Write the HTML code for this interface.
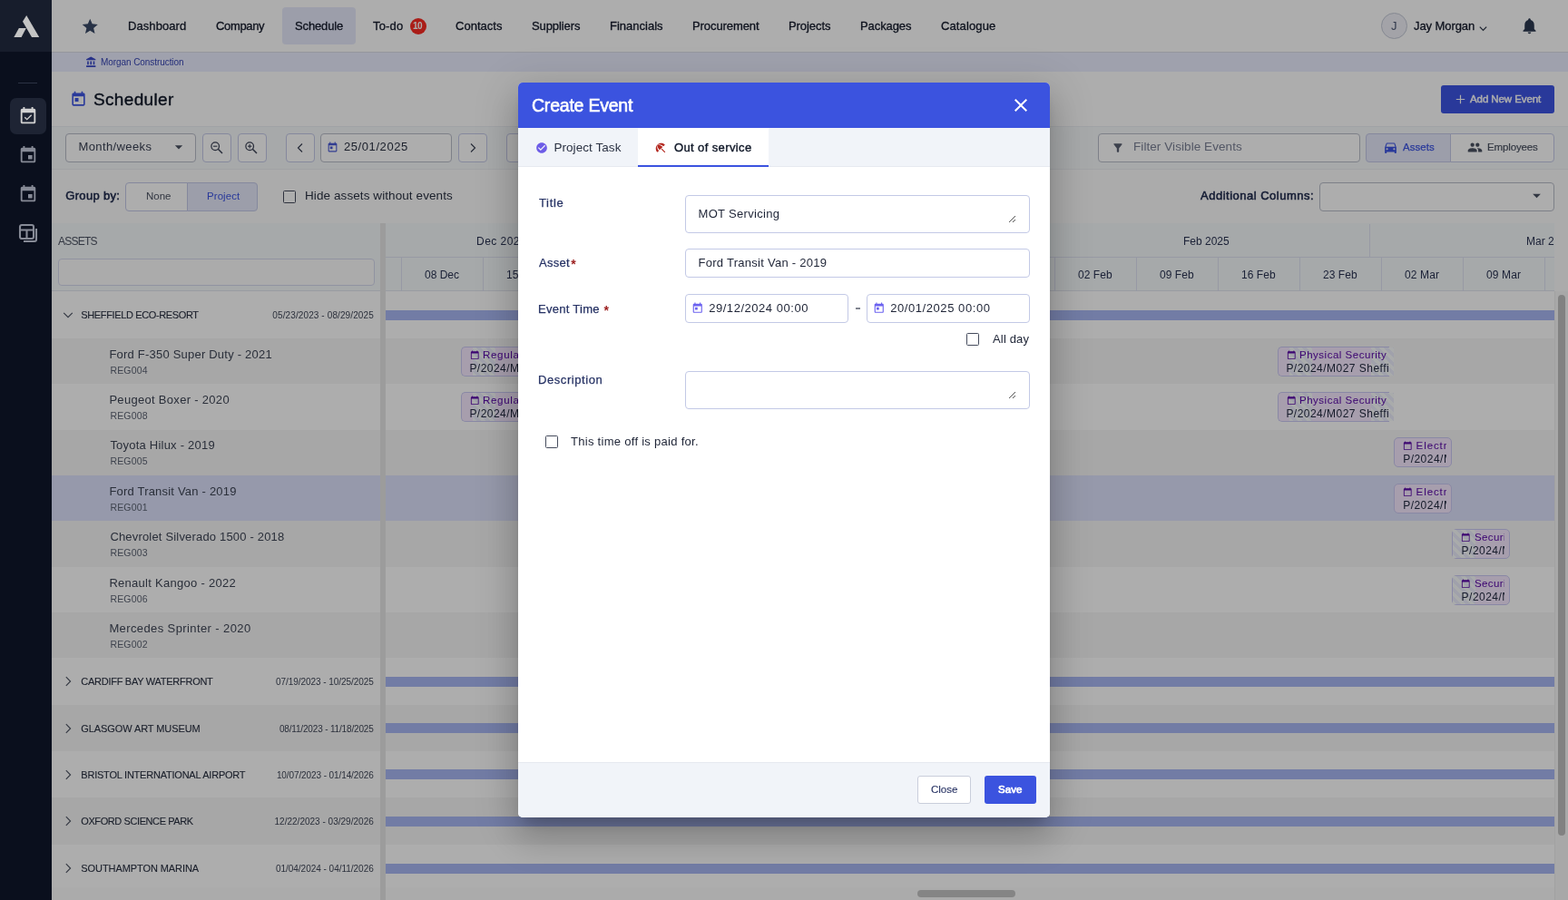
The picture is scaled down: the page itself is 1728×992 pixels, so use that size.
<!DOCTYPE html>
<html lang="en">
<head>
<meta charset="utf-8">
<title>Scheduler - Create Event</title>
<style>
html,body{margin:0;padding:0;}
body{width:1728px;height:992px;overflow:hidden;position:relative;background:#fff;font-family:"Liberation Sans", sans-serif;}
.b{position:absolute;box-sizing:border-box;}
.i{position:absolute;display:block;overflow:visible;}
.t{position:absolute;white-space:nowrap;font-family:"Liberation Sans", sans-serif;}
#page,#overlay,#modalwrap{position:absolute;left:0;top:0;width:1728px;height:992px;overflow:hidden;}
#overlay{background:rgba(0,0,0,0.32);}
#page,#modalwrap{will-change:transform;}
</style>
</head>
<body>
<div id="page">
<div class="b" style="left:57px;top:0px;width:1671px;height:58px;background:#ffffff;border-bottom:1px solid #dcdfe8;"></div>
<div class="b" style="left:311px;top:8px;width:81px;height:41px;background:#e6e9fb;border-radius:4px;"></div>
<svg class="i" style="left:89.4px;top:18.7px" width="20.5" height="20.5" viewBox="0 0 24 24" fill="#3a4a68" ><path d="M12 17.27L18.18 21l-1.64-7.03L22 9.24l-7.19-.61L12 2 9.19 8.63 2 9.24l5.46 4.73L5.82 21z"/></svg>
<div class="b" style="left:451.5px;top:19.5px;width:18px;height:18px;background:#fb2c24;border-radius:9px;"></div>
<div class="b" style="left:1522px;top:14px;width:29px;height:29px;background:#f0f1f8;border:1px solid #c4c9d6;border-radius:15px;"></div>
<svg class="i" style="left:1629px;top:26px" width="11" height="11" viewBox="0 0 12 12" ><path d="M2 4l4 4 4-4" stroke="#2b3445" stroke-width="1.4" fill="none"/></svg>
<svg class="i" style="left:1675px;top:18.4px" width="21" height="21" viewBox="0 0 24 24" fill="#2b3850" ><path d="M12 22c1.1 0 2-.9 2-2h-4c0 1.1.89 2 2 2zm6-6v-5c0-3.07-1.64-5.64-4.5-6.32V4c0-.83-.67-1.5-1.5-1.5s-1.5.67-1.5 1.5v.68C7.63 5.36 6 7.92 6 11v5l-2 2v1h16v-1l-2-2z"/></svg>
<div class="b" style="left:57px;top:58px;width:1671px;height:21px;background:#eaedff;"></div>
<svg class="i" style="left:94px;top:62px" width="13" height="13" viewBox="0 0 24 24" fill="#3a49c9" ><path d="M4 10v7h3v-7H4zm6 0v7h3v-7h-3zM2 22h19v-3H2v3zm14-12v7h3v-7h-3zm-4.5-9L2 6v2h19V6l-9.5-5z"/></svg>
<svg class="i" style="left:76.5px;top:99.5px" width="19" height="19" viewBox="0 0 24 24" fill="#3d55e3" ><path d="M19 3h-1V1h-2v2H8V1H6v2H5c-1.11 0-1.99.9-1.99 2L3 19c0 1.1.89 2 2 2h14c1.1 0 2-.9 2-2V5c0-1.1-.9-2-2-2zm0 16H5V8h14v11zM7 10h5v5H7z"/></svg>
<div class="b" style="left:1588px;top:94px;width:125px;height:31px;background:#3d55e3;border-radius:3px;"></div>
<svg class="i" style="left:1604px;top:104px" width="11" height="11" viewBox="0 0 11 11" ><path d="M5.5 0.8v9.4M0.8 5.5h9.4" stroke="#fff" stroke-width="1.2" fill="none"/></svg>
<div class="b" style="left:57px;top:139px;width:1671px;height:48px;background:#f6f9fb;border-top:1px solid #eceff4;border-bottom:1px solid #eceff4;"></div>
<div class="b" style="left:72px;top:147px;width:144px;height:32px;background:#ffffff;border:1px solid #b9bdc9;border-radius:4px;"></div>
<svg class="i" style="left:186.5px;top:152.1px" width="20" height="20" viewBox="0 0 24 24" fill="#4b5262" ><path d="M7 10l5 5 5-5z"/></svg>
<div class="b" style="left:223px;top:147px;width:32px;height:32px;background:#ffffff;border:1px solid #c4c9e8;border-radius:4px;"></div>
<svg class="i" style="left:232.0px;top:156.4px" width="14" height="14" viewBox="0 0 14 14" ><circle cx="5.2" cy="5.2" r="4.3" fill="none" stroke="#3c4356" stroke-width="1.25"/><path d="M8.3 8.3L13 13" stroke="#3c4356" stroke-width="1.5" fill="none"/><path d="M3 5.2h4.4" stroke="#3c4356" stroke-width="1.1" fill="none"/></svg>
<div class="b" style="left:262px;top:147px;width:32px;height:32px;background:#ffffff;border:1px solid #c4c9e8;border-radius:4px;"></div>
<svg class="i" style="left:270.4px;top:156.4px" width="14" height="14" viewBox="0 0 14 14" ><circle cx="5.2" cy="5.2" r="4.3" fill="none" stroke="#3c4356" stroke-width="1.25"/><path d="M8.3 8.3L13 13" stroke="#3c4356" stroke-width="1.5" fill="none"/><path d="M3 5.2h4.4" stroke="#3c4356" stroke-width="1.1" fill="none"/><path d="M5.2 3v4.4" stroke="#3c4356" stroke-width="1.1" fill="none"/></svg>
<div class="b" style="left:315px;top:147px;width:32px;height:32px;background:#ffffff;border:1px solid #c4c9e8;border-radius:4px;"></div>
<svg class="i" style="left:325px;top:157px" width="12" height="12" viewBox="0 0 12 12" ><path d="M8 1.5L3.5 6 8 10.5" stroke="#3c4356" stroke-width="1.2" fill="none"/></svg>
<div class="b" style="left:353px;top:147px;width:145px;height:32px;background:#ffffff;border:1px solid #b9bdc9;border-radius:4px;"></div>
<svg class="i" style="left:360px;top:156px" width="13" height="13" viewBox="0 0 24 24" fill="#4a5bd6" ><path d="M19 3h-1V1h-2v2H8V1H6v2H5c-1.11 0-1.99.9-1.99 2L3 19c0 1.1.89 2 2 2h14c1.1 0 2-.9 2-2V5c0-1.1-.9-2-2-2zm0 16H5V8h14v11zM7 10h5v5H7z"/></svg>
<div class="b" style="left:505px;top:147px;width:32px;height:32px;background:#ffffff;border:1px solid #c4c9e8;border-radius:4px;"></div>
<svg class="i" style="left:515px;top:157px" width="12" height="12" viewBox="0 0 12 12" ><path d="M4 1.5L8.5 6 4 10.5" stroke="#3c4356" stroke-width="1.2" fill="none"/></svg>
<div class="b" style="left:558px;top:147px;width:60px;height:32px;background:#ffffff;border:1px solid #c4c9e8;border-radius:4px;"></div>
<div class="b" style="left:1210px;top:147px;width:289px;height:32px;background:#ffffff;border:1px solid #b9bdc9;border-radius:4px;"></div>
<svg class="i" style="left:1225px;top:156px" width="14" height="14" viewBox="0 0 24 24" fill="#5a6172" ><path d="M4.25 5.61C6.27 8.2 10 13 10 13v6c0 .55.45 1 1 1h2c.55 0 1-.45 1-1v-6s3.72-4.8 5.74-7.39A.998.998 0 0 0 18.95 4H5.04c-.83 0-1.3.95-.79 1.61z"/></svg>
<div class="b" style="left:1505px;top:147px;width:94px;height:32px;background:#e6e9fb;border:1px solid #c4c9e8;border-radius:4px 0 0 4px;"></div>
<div class="b" style="left:1598px;top:147px;width:115px;height:32px;background:#ffffff;border:1px solid #c4c9e8;border-radius:0 4px 4px 0;"></div>
<svg class="i" style="left:1524px;top:154px" width="17" height="17" viewBox="0 0 24 24" fill="#3d55e3" ><path d="M18.92 6.01C18.72 5.42 18.16 5 17.5 5h-11c-.66 0-1.21.42-1.42 1.01L3 12v8c0 .55.45 1 1 1h1c.55 0 1-.45 1-1v-1h12v1c0 .55.45 1 1 1h1c.55 0 1-.45 1-1v-8l-2.08-5.99zM6.5 16c-.83 0-1.5-.67-1.5-1.5S5.67 13 6.5 13s1.5.67 1.5 1.5S7.33 16 6.5 16zm11 0c-.83 0-1.5-.67-1.5-1.5s.67-1.5 1.5-1.5 1.5.67 1.5 1.5-.67 1.5-1.5 1.5zM5 11l1.5-4.5h11L19 11H5z"/></svg>
<svg class="i" style="left:1617px;top:154px" width="17" height="17" viewBox="0 0 24 24" fill="#4b5262" ><path d="M16 11c1.66 0 2.99-1.34 2.99-3S17.66 5 16 5c-1.66 0-3 1.34-3 3s1.34 3 3 3zm-8 0c1.66 0 2.99-1.34 2.99-3S9.66 5 8 5C6.34 5 5 6.34 5 8s1.34 3 3 3zm0 2c-2.33 0-7 1.17-7 3.5V19h14v-2.5c0-2.33-4.67-3.5-7-3.5zm8 0c-.29 0-.62.02-.97.05 1.16.84 1.97 1.97 1.97 3.45V19h6v-2.5c0-2.33-4.67-3.5-7-3.5z"/></svg>
<div class="b" style="left:57px;top:187px;width:1671px;height:59px;background:#fdfdfd;"></div>
<div class="b" style="left:138px;top:201px;width:69px;height:32px;background:#ffffff;border:1px solid #c4c9e8;border-radius:4px 0 0 4px;"></div>
<div class="b" style="left:206px;top:201px;width:78px;height:32px;background:#e6e9fb;border:1px solid #c4c9e8;border-radius:0 4px 4px 0;"></div>
<div class="b" style="left:312.2px;top:209.5px;width:14px;height:14px;background:#ffffff;border:1.4px solid #454b5c;border-radius:1.5px;"></div>
<div class="b" style="left:1454px;top:201px;width:259px;height:32px;background:#ffffff;border:1px solid #b9bdc9;border-radius:4px;"></div>
<svg class="i" style="left:1683.3px;top:205.3px" width="21" height="21" viewBox="0 0 24 24" fill="#4b5262" ><path d="M7 10l5 5 5-5z"/></svg>
<div class="b" style="left:57px;top:246px;width:1671px;height:75px;background:#f5f9fb;border-bottom:1px solid #e2e5ee;"></div>
<div class="b" style="left:64px;top:285px;width:349px;height:30px;background:#fdfdfd;border:1px solid #d5d9ee;border-radius:4px;"></div>
<div class="b" style="left:425px;top:283px;width:1288px;height:1px;background:#dfe2f2;"></div>
<div class="b" style="left:442px;top:284px;width:1px;height:37px;background:#dfe2f2;"></div>
<div class="b" style="left:532px;top:284px;width:1px;height:37px;background:#dfe2f2;"></div>
<div class="b" style="left:1162px;top:284px;width:1px;height:37px;background:#dfe2f2;"></div>
<div class="b" style="left:1252px;top:284px;width:1px;height:37px;background:#dfe2f2;"></div>
<div class="b" style="left:1342px;top:284px;width:1px;height:37px;background:#dfe2f2;"></div>
<div class="b" style="left:1432px;top:284px;width:1px;height:37px;background:#dfe2f2;"></div>
<div class="b" style="left:1522px;top:284px;width:1px;height:37px;background:#dfe2f2;"></div>
<div class="b" style="left:1612px;top:284px;width:1px;height:37px;background:#dfe2f2;"></div>
<div class="b" style="left:1702px;top:284px;width:1px;height:37px;background:#dfe2f2;"></div>
<div class="b" style="left:1509px;top:247px;width:1px;height:37px;background:#dfe2f2;"></div>
<div class="b" style="left:57px;top:322px;width:1656px;height:51px;background:#ffffff;"></div>
<div class="b" style="left:57px;top:373px;width:1656px;height:50px;background:#f6f6f6;"></div>
<div class="b" style="left:57px;top:423px;width:1656px;height:51px;background:#ffffff;"></div>
<div class="b" style="left:57px;top:474px;width:1656px;height:50px;background:#f6f6f6;"></div>
<div class="b" style="left:57px;top:524px;width:1656px;height:50px;background:#dde2fc;"></div>
<div class="b" style="left:57px;top:574px;width:1656px;height:51px;background:#f6f6f6;"></div>
<div class="b" style="left:57px;top:625px;width:1656px;height:50px;background:#ffffff;"></div>
<div class="b" style="left:57px;top:675px;width:1656px;height:50px;background:#f6f6f6;"></div>
<div class="b" style="left:57px;top:725px;width:1656px;height:52px;background:#ffffff;"></div>
<div class="b" style="left:57px;top:777px;width:1656px;height:51px;background:#f6f6f6;"></div>
<div class="b" style="left:57px;top:828px;width:1656px;height:51px;background:#ffffff;"></div>
<div class="b" style="left:57px;top:879px;width:1656px;height:52px;background:#f6f6f6;"></div>
<div class="b" style="left:57px;top:931px;width:1656px;height:46px;background:#ffffff;"></div>
<div class="b" style="left:57px;top:977px;width:1656px;height:15px;background:#fdfdfd;border-top:1px solid #ffffff;"></div>
<div class="b" style="left:425px;top:342px;width:1288px;height:11px;background:#a9b7f4;"></div>
<div class="b" style="left:425px;top:746px;width:1288px;height:11px;background:#a9b7f4;"></div>
<div class="b" style="left:425px;top:797px;width:1288px;height:11px;background:#a9b7f4;"></div>
<div class="b" style="left:425px;top:848px;width:1288px;height:11px;background:#a9b7f4;"></div>
<div class="b" style="left:425px;top:900px;width:1288px;height:11px;background:#a9b7f4;"></div>
<div class="b" style="left:425px;top:952px;width:1288px;height:11px;background:#a9b7f4;"></div>
<div class="b" style="left:419px;top:246px;width:6px;height:746px;background:#e6e6e6;"></div>
<div class="b" style="left:1713px;top:246px;width:15px;height:746px;background:#f8f8f8;border-left:1px solid #ededed;"></div>
<div class="b" style="left:1713px;top:246px;width:15px;height:75px;background:#fdfdfd;"></div>
<div class="b" style="left:1717px;top:324.5px;width:8px;height:596px;background:#bfbfbf;border-radius:4px;"></div>
<div class="b" style="left:1010.5px;top:981px;width:108.5px;height:8px;background:#c4c4c4;border-radius:4px;"></div>
<svg class="i" style="left:68.5px;top:341px" width="12" height="12" viewBox="0 0 12 12" ><path d="M1.2 3.8l4.8 4.8 4.8-4.8" stroke="#4b5262" stroke-width="1.1" fill="none"/></svg>
<svg class="i" style="left:68.5px;top:745px" width="12" height="12" viewBox="0 0 12 12" ><path d="M3.8 1.2L8.6 6 3.8 10.8" stroke="#4b5262" stroke-width="1.1" fill="none"/></svg>
<svg class="i" style="left:68.5px;top:796.5px" width="12" height="12" viewBox="0 0 12 12" ><path d="M3.8 1.2L8.6 6 3.8 10.8" stroke="#4b5262" stroke-width="1.1" fill="none"/></svg>
<svg class="i" style="left:68.5px;top:847.5px" width="12" height="12" viewBox="0 0 12 12" ><path d="M3.8 1.2L8.6 6 3.8 10.8" stroke="#4b5262" stroke-width="1.1" fill="none"/></svg>
<svg class="i" style="left:68.5px;top:899px" width="12" height="12" viewBox="0 0 12 12" ><path d="M3.8 1.2L8.6 6 3.8 10.8" stroke="#4b5262" stroke-width="1.1" fill="none"/></svg>
<svg class="i" style="left:68.5px;top:951px" width="12" height="12" viewBox="0 0 12 12" ><path d="M3.8 1.2L8.6 6 3.8 10.8" stroke="#4b5262" stroke-width="1.1" fill="none"/></svg>
<div class="b" style="left:508px;top:382px;width:123px;height:33px;background:#f6e9ff;border:1px solid #cbc9f3;border-radius:5px 0 0 5px;border-right:none;"></div>
<div class="b" style="left:520.6px;top:383px;width:25.7px;height:31px;background:repeating-linear-gradient(45deg,#fafcfd 0,#fafcfd 3.5px,#eceefc 3.5px,#eceefc 7px);"></div>
<div class="b" style="left:610.6px;top:383px;width:25.4px;height:31px;background:repeating-linear-gradient(45deg,#fafcfd 0,#fafcfd 3.5px,#eceefc 3.5px,#eceefc 7px);"></div>
<svg class="i" style="left:517.5px;top:386px" width="10.5" height="10.5" viewBox="0 0 24 24" fill="#5b0aa8" ><path d="M20 3h-1V1h-2v2H7V1H5v2H4c-1.1 0-2 .9-2 2v16c0 1.1.9 2 2 2h16c1.1 0 2-.9 2-2V5c0-1.1-.9-2-2-2zm0 18H4V8h16v13z"/></svg>
<div class="b" style="left:508px;top:432px;width:123px;height:33px;background:#f6e9ff;border:1px solid #cbc9f3;border-radius:5px 0 0 5px;border-right:none;"></div>
<div class="b" style="left:520.6px;top:433px;width:25.7px;height:31px;background:repeating-linear-gradient(45deg,#fafcfd 0,#fafcfd 3.5px,#eceefc 3.5px,#eceefc 7px);"></div>
<div class="b" style="left:610.6px;top:433px;width:25.4px;height:31px;background:repeating-linear-gradient(45deg,#fafcfd 0,#fafcfd 3.5px,#eceefc 3.5px,#eceefc 7px);"></div>
<svg class="i" style="left:517.5px;top:436px" width="10.5" height="10.5" viewBox="0 0 24 24" fill="#5b0aa8" ><path d="M20 3h-1V1h-2v2H7V1H5v2H4c-1.1 0-2 .9-2 2v16c0 1.1.9 2 2 2h16c1.1 0 2-.9 2-2V5c0-1.1-.9-2-2-2zm0 18H4V8h16v13z"/></svg>
<div class="b" style="left:1408px;top:382px;width:123px;height:33px;background:#f6e9ff;border:1px solid #cbc9f3;border-radius:5px 0 0 5px;border-right:none;"></div>
<div class="b" style="left:1420.6px;top:383px;width:25.7px;height:31px;background:repeating-linear-gradient(45deg,#fafcfd 0,#fafcfd 3.5px,#eceefc 3.5px,#eceefc 7px);"></div>
<div class="b" style="left:1510.6px;top:383px;width:25.7px;height:31px;background:repeating-linear-gradient(45deg,#fafcfd 0,#fafcfd 3.5px,#eceefc 3.5px,#eceefc 7px);"></div>
<svg class="i" style="left:1417.5px;top:386px" width="10.5" height="10.5" viewBox="0 0 24 24" fill="#5b0aa8" ><path d="M20 3h-1V1h-2v2H7V1H5v2H4c-1.1 0-2 .9-2 2v16c0 1.1.9 2 2 2h16c1.1 0 2-.9 2-2V5c0-1.1-.9-2-2-2zm0 18H4V8h16v13z"/></svg>
<div class="b" style="left:1408px;top:432px;width:123px;height:33px;background:#f6e9ff;border:1px solid #cbc9f3;border-radius:5px 0 0 5px;border-right:none;"></div>
<div class="b" style="left:1420.6px;top:433px;width:25.7px;height:31px;background:repeating-linear-gradient(45deg,#fafcfd 0,#fafcfd 3.5px,#eceefc 3.5px,#eceefc 7px);"></div>
<div class="b" style="left:1510.6px;top:433px;width:25.7px;height:31px;background:repeating-linear-gradient(45deg,#fafcfd 0,#fafcfd 3.5px,#eceefc 3.5px,#eceefc 7px);"></div>
<svg class="i" style="left:1417.5px;top:436px" width="10.5" height="10.5" viewBox="0 0 24 24" fill="#5b0aa8" ><path d="M20 3h-1V1h-2v2H7V1H5v2H4c-1.1 0-2 .9-2 2v16c0 1.1.9 2 2 2h16c1.1 0 2-.9 2-2V5c0-1.1-.9-2-2-2zm0 18H4V8h16v13z"/></svg>
<div class="b" style="left:1536px;top:482px;width:64px;height:33px;background:#f6e9ff;border:1px solid #cbc9f3;border-radius:5px;"></div>
<svg class="i" style="left:1545.5px;top:486px" width="10.5" height="10.5" viewBox="0 0 24 24" fill="#5b0aa8" ><path d="M20 3h-1V1h-2v2H7V1H5v2H4c-1.1 0-2 .9-2 2v16c0 1.1.9 2 2 2h16c1.1 0 2-.9 2-2V5c0-1.1-.9-2-2-2zm0 18H4V8h16v13z"/></svg>
<div class="b" style="left:1536px;top:533px;width:64px;height:33px;background:#f6e9ff;border:1px solid #cbc9f3;border-radius:5px;"></div>
<svg class="i" style="left:1545.5px;top:537px" width="10.5" height="10.5" viewBox="0 0 24 24" fill="#5b0aa8" ><path d="M20 3h-1V1h-2v2H7V1H5v2H4c-1.1 0-2 .9-2 2v16c0 1.1.9 2 2 2h16c1.1 0 2-.9 2-2V5c0-1.1-.9-2-2-2zm0 18H4V8h16v13z"/></svg>
<div class="b" style="left:1600px;top:583px;width:64px;height:33px;background:#f6e9ff;border:1px solid #cbc9f3;border-radius:5px;"></div>
<div class="b" style="left:1601px;top:584px;width:25.3px;height:31px;background:repeating-linear-gradient(45deg,#fafcfd 0,#fafcfd 3.5px,#eceefc 3.5px,#eceefc 7px);"></div>
<svg class="i" style="left:1609.5px;top:587px" width="10.5" height="10.5" viewBox="0 0 24 24" fill="#5b0aa8" ><path d="M20 3h-1V1h-2v2H7V1H5v2H4c-1.1 0-2 .9-2 2v16c0 1.1.9 2 2 2h16c1.1 0 2-.9 2-2V5c0-1.1-.9-2-2-2zm0 18H4V8h16v13z"/></svg>
<div class="b" style="left:1600px;top:634px;width:64px;height:33px;background:#f6e9ff;border:1px solid #cbc9f3;border-radius:5px;"></div>
<div class="b" style="left:1601px;top:635px;width:25.3px;height:31px;background:repeating-linear-gradient(45deg,#fafcfd 0,#fafcfd 3.5px,#eceefc 3.5px,#eceefc 7px);"></div>
<svg class="i" style="left:1609.5px;top:638px" width="10.5" height="10.5" viewBox="0 0 24 24" fill="#5b0aa8" ><path d="M20 3h-1V1h-2v2H7V1H5v2H4c-1.1 0-2 .9-2 2v16c0 1.1.9 2 2 2h16c1.1 0 2-.9 2-2V5c0-1.1-.9-2-2-2zm0 18H4V8h16v13z"/></svg>
<span class="t" style="left:141.00px;top:20px;font-size:13px;line-height:18px;color:#141a2b;letter-spacing:0.079px;-webkit-text-stroke:0.3px #141a2b;">Dashboard</span>
<span class="t" style="left:238.00px;top:20px;font-size:13px;line-height:18px;color:#141a2b;letter-spacing:-0.356px;-webkit-text-stroke:0.3px #141a2b;">Company</span>
<span class="t" style="left:325.00px;top:20px;font-size:13px;line-height:18px;color:#141a2b;letter-spacing:-0.140px;-webkit-text-stroke:0.3px #141a2b;">Schedule</span>
<span class="t" style="left:411.00px;top:20px;font-size:13px;line-height:18px;color:#141a2b;letter-spacing:0.178px;-webkit-text-stroke:0.3px #141a2b;">To-do</span>
<span class="t" style="left:502.00px;top:20px;font-size:13px;line-height:18px;color:#141a2b;letter-spacing:0.028px;-webkit-text-stroke:0.3px #141a2b;">Contacts</span>
<span class="t" style="left:586.00px;top:20px;font-size:13px;line-height:18px;color:#141a2b;letter-spacing:-0.087px;-webkit-text-stroke:0.3px #141a2b;">Suppliers</span>
<span class="t" style="left:672.00px;top:20px;font-size:13px;line-height:18px;color:#141a2b;-webkit-text-stroke:0.3px #141a2b;">Financials</span>
<span class="t" style="left:763.00px;top:20px;font-size:13px;line-height:18px;color:#141a2b;letter-spacing:-0.081px;-webkit-text-stroke:0.3px #141a2b;">Procurement</span>
<span class="t" style="left:869.00px;top:20px;font-size:13px;line-height:18px;color:#141a2b;letter-spacing:-0.066px;-webkit-text-stroke:0.3px #141a2b;">Projects</span>
<span class="t" style="left:948.00px;top:20px;font-size:13px;line-height:18px;color:#141a2b;letter-spacing:-0.084px;-webkit-text-stroke:0.3px #141a2b;">Packages</span>
<span class="t" style="left:1037.00px;top:20px;font-size:13px;line-height:18px;color:#141a2b;letter-spacing:0.120px;-webkit-text-stroke:0.3px #141a2b;">Catalogue</span>
<span class="t" style="left:455.00px;top:22px;font-size:10px;line-height:14px;color:#ffffff;font-weight:700;letter-spacing:-0.562px;">10</span>
<span class="t" style="left:1533.00px;top:20px;font-size:13px;line-height:18px;color:#4a5470;">J</span>
<span class="t" style="left:1558.00px;top:20px;font-size:13px;line-height:18px;color:#141a2b;letter-spacing:-0.077px;-webkit-text-stroke:0.3px #141a2b;">Jay Morgan</span>
<span class="t" style="left:111.00px;top:62px;font-size:10px;line-height:14px;color:#3846b5;letter-spacing:-0.070px;">Morgan Construction</span>
<span class="t" style="left:103.00px;top:96px;font-size:19px;line-height:27px;color:#101828;letter-spacing:0.346px;-webkit-text-stroke:0.4px #101828;">Scheduler</span>
<span class="t" style="left:1620.00px;top:101px;font-size:11.5px;line-height:16px;color:#ffffff;letter-spacing:-0.089px;-webkit-text-stroke:0.45px #ffffff;">Add New Event</span>
<span class="t" style="left:86.50px;top:153px;font-size:13px;line-height:18px;color:#3a4154;letter-spacing:0.391px;">Month/weeks</span>
<span class="t" style="left:379.00px;top:153px;font-size:13px;line-height:18px;color:#2a3142;letter-spacing:0.574px;">25/01/2025</span>
<span class="t" style="left:1249.00px;top:152px;font-size:13.5px;line-height:19px;color:#7b8196;letter-spacing:0.073px;">Filter Visible Events</span>
<span class="t" style="left:1546.00px;top:154px;font-size:11.5px;line-height:16px;color:#3d55e3;letter-spacing:0.048px;-webkit-text-stroke:0.25px #3d55e3;">Assets</span>
<span class="t" style="left:1639.00px;top:154px;font-size:11.5px;line-height:16px;color:#4b5262;letter-spacing:-0.142px;-webkit-text-stroke:0.2px #4b5262;">Employees</span>
<span class="t" style="left:72.30px;top:207px;font-size:13px;line-height:18px;color:#1f2a4d;letter-spacing:0.316px;-webkit-text-stroke:0.55px #1f2a4d;">Group by:</span>
<span class="t" style="left:161.00px;top:208px;font-size:11.5px;line-height:16px;color:#4b5262;letter-spacing:-0.032px;">None</span>
<span class="t" style="left:228.00px;top:208px;font-size:11.5px;line-height:16px;color:#3d55e3;letter-spacing:0.067px;">Project</span>
<span class="t" style="left:336.00px;top:206px;font-size:13.5px;line-height:19px;color:#2a3142;letter-spacing:0.087px;">Hide assets without events</span>
<span class="t" style="left:1323.00px;top:207px;font-size:13px;line-height:18px;color:#1f2a4d;letter-spacing:0.500px;-webkit-text-stroke:0.55px #1f2a4d;">Additional Columns:</span>
<span class="t" style="left:64.00px;top:258px;font-size:12px;line-height:17px;color:#4b5262;letter-spacing:-0.769px;">ASSETS</span>
<span class="t" style="left:525.00px;top:258px;font-size:12px;line-height:17px;color:#2a3352;letter-spacing:0.472px;">Dec 2024</span>
<span class="t" style="left:1304.00px;top:258px;font-size:12px;line-height:17px;color:#2a3352;">Feb 2025</span>
<div class="b" style="left:1600px;top:247px;width:113px;height:37px;overflow:hidden"><span class="t" style="left:82.00px;top:11px;font-size:12px;line-height:17px;color:#2a3352;">Mar 2025</span></div>
<span class="t" style="left:468.00px;top:295px;font-size:12px;line-height:17px;color:#2a3352;">08 Dec</span>
<span class="t" style="left:558.00px;top:295px;font-size:12px;line-height:17px;color:#2a3352;">15 Dec</span>
<span class="t" style="left:1188.00px;top:295px;font-size:12px;line-height:17px;color:#2a3352;letter-spacing:0.063px;">02 Feb</span>
<span class="t" style="left:1278.00px;top:295px;font-size:12px;line-height:17px;color:#2a3352;letter-spacing:0.063px;">09 Feb</span>
<span class="t" style="left:1368.00px;top:295px;font-size:12px;line-height:17px;color:#2a3352;letter-spacing:0.063px;">16 Feb</span>
<span class="t" style="left:1458.00px;top:295px;font-size:12px;line-height:17px;color:#2a3352;letter-spacing:0.063px;">23 Feb</span>
<span class="t" style="left:1548.00px;top:295px;font-size:12px;line-height:17px;color:#2a3352;letter-spacing:0.130px;">02 Mar</span>
<span class="t" style="left:1638.00px;top:295px;font-size:12px;line-height:17px;color:#2a3352;letter-spacing:0.130px;">09 Mar</span>
<span class="t" style="left:89.30px;top:340px;font-size:11px;line-height:15px;color:#2a3142;letter-spacing:-0.368px;-webkit-text-stroke:0.1px #2a3142;">SHEFFIELD ECO-RESORT</span>
<span class="t" style="left:300.30px;top:341px;font-size:10px;line-height:14px;color:#414859;letter-spacing:0.113px;">05/23/2023 - 08/29/2025</span>
<span class="t" style="left:89.30px;top:744px;font-size:11px;line-height:15px;color:#2a3142;letter-spacing:-0.268px;-webkit-text-stroke:0.1px #2a3142;">CARDIFF BAY WATERFRONT</span>
<span class="t" style="left:303.90px;top:745px;font-size:10px;line-height:14px;color:#414859;letter-spacing:-0.051px;">07/19/2023 - 10/25/2025</span>
<span class="t" style="left:89.30px;top:796px;font-size:11px;line-height:15px;color:#2a3142;letter-spacing:-0.087px;-webkit-text-stroke:0.1px #2a3142;">GLASGOW ART MUSEUM</span>
<span class="t" style="left:307.90px;top:797px;font-size:10px;line-height:14px;color:#414859;letter-spacing:-0.165px;">08/11/2023 - 11/18/2025</span>
<span class="t" style="left:89.30px;top:847px;font-size:11px;line-height:15px;color:#2a3142;letter-spacing:-0.220px;-webkit-text-stroke:0.1px #2a3142;">BRISTOL INTERNATIONAL AIRPORT</span>
<span class="t" style="left:304.90px;top:848px;font-size:10px;line-height:14px;color:#414859;letter-spacing:-0.096px;">10/07/2023 - 01/14/2026</span>
<span class="t" style="left:89.30px;top:898px;font-size:11px;line-height:15px;color:#2a3142;letter-spacing:-0.409px;-webkit-text-stroke:0.1px #2a3142;">OXFORD SCIENCE PARK</span>
<span class="t" style="left:302.50px;top:899px;font-size:10px;line-height:14px;color:#414859;letter-spacing:0.013px;">12/22/2023 - 03/29/2026</span>
<span class="t" style="left:89.30px;top:950px;font-size:11px;line-height:15px;color:#2a3142;letter-spacing:-0.080px;-webkit-text-stroke:0.1px #2a3142;">SOUTHAMPTON MARINA</span>
<span class="t" style="left:303.90px;top:951px;font-size:10px;line-height:14px;color:#414859;letter-spacing:-0.017px;">01/04/2024 - 04/11/2026</span>
<span class="t" style="left:120.40px;top:382px;font-size:13px;line-height:18px;color:#3f4656;letter-spacing:0.215px;">Ford F-350 Super Duty - 2021</span>
<span class="t" style="left:121.40px;top:401px;font-size:10.5px;line-height:15px;color:#5d6474;letter-spacing:0.193px;">REG004</span>
<span class="t" style="left:120.40px;top:432px;font-size:13px;line-height:18px;color:#3f4656;letter-spacing:0.303px;">Peugeot Boxer - 2020</span>
<span class="t" style="left:121.40px;top:451px;font-size:10.5px;line-height:15px;color:#5d6474;letter-spacing:0.193px;">REG008</span>
<span class="t" style="left:121.40px;top:482px;font-size:13px;line-height:18px;color:#3f4656;letter-spacing:0.219px;">Toyota Hilux - 2019</span>
<span class="t" style="left:121.40px;top:501px;font-size:10.5px;line-height:15px;color:#5d6474;letter-spacing:0.193px;">REG005</span>
<span class="t" style="left:120.40px;top:533px;font-size:13px;line-height:18px;color:#3f4656;letter-spacing:0.200px;">Ford Transit Van - 2019</span>
<span class="t" style="left:121.40px;top:552px;font-size:10.5px;line-height:15px;color:#5d6474;letter-spacing:0.193px;">REG001</span>
<span class="t" style="left:121.40px;top:583px;font-size:13px;line-height:18px;color:#3f4656;letter-spacing:0.179px;">Chevrolet Silverado 1500 - 2018</span>
<span class="t" style="left:121.40px;top:602px;font-size:10.5px;line-height:15px;color:#5d6474;letter-spacing:0.193px;">REG003</span>
<span class="t" style="left:120.40px;top:634px;font-size:13px;line-height:18px;color:#3f4656;letter-spacing:0.276px;">Renault Kangoo - 2022</span>
<span class="t" style="left:121.40px;top:653px;font-size:10.5px;line-height:15px;color:#5d6474;letter-spacing:0.193px;">REG006</span>
<span class="t" style="left:120.40px;top:684px;font-size:13px;line-height:18px;color:#3f4656;letter-spacing:0.393px;">Mercedes Sprinter - 2020</span>
<span class="t" style="left:121.40px;top:703px;font-size:10.5px;line-height:15px;color:#5d6474;letter-spacing:0.193px;">REG002</span>
<div class="b" style="left:509px;top:383px;width:120.70000000000005px;height:31px;overflow:hidden"><span class="t" style="left:23.00px;top:0px;font-size:11.5px;line-height:16px;color:#5b0aa8;letter-spacing:0.691px;-webkit-text-stroke:0.05px #5b0aa8;">Regular Maintenance</span></div>
<div class="b" style="left:509px;top:383px;width:120.70000000000005px;height:31px;overflow:hidden"><span class="t" style="left:8.40px;top:15px;font-size:12px;line-height:17px;color:#222a40;letter-spacing:0.475px;">P/2024/M027 Sheffield</span></div>
<div class="b" style="left:509px;top:433px;width:120.70000000000005px;height:31px;overflow:hidden"><span class="t" style="left:23.00px;top:0px;font-size:11.5px;line-height:16px;color:#5b0aa8;letter-spacing:0.691px;-webkit-text-stroke:0.05px #5b0aa8;">Regular Maintenance</span></div>
<div class="b" style="left:509px;top:433px;width:120.70000000000005px;height:31px;overflow:hidden"><span class="t" style="left:8.40px;top:15px;font-size:12px;line-height:17px;color:#222a40;letter-spacing:0.475px;">P/2024/M027 Sheffield</span></div>
<div class="b" style="left:1409px;top:383px;width:121.0px;height:31px;overflow:hidden"><span class="t" style="left:23.00px;top:0px;font-size:11.5px;line-height:16px;color:#5b0aa8;letter-spacing:0.512px;-webkit-text-stroke:0.05px #5b0aa8;">Physical Security</span></div>
<div class="b" style="left:1409px;top:383px;width:121.0px;height:31px;overflow:hidden"><span class="t" style="left:8.40px;top:15px;font-size:12px;line-height:17px;color:#222a40;letter-spacing:0.475px;">P/2024/M027 Sheffield</span></div>
<div class="b" style="left:1409px;top:433px;width:121.0px;height:31px;overflow:hidden"><span class="t" style="left:23.00px;top:0px;font-size:11.5px;line-height:16px;color:#5b0aa8;letter-spacing:0.512px;-webkit-text-stroke:0.05px #5b0aa8;">Physical Security</span></div>
<div class="b" style="left:1409px;top:433px;width:121.0px;height:31px;overflow:hidden"><span class="t" style="left:8.40px;top:15px;font-size:12px;line-height:17px;color:#222a40;letter-spacing:0.475px;">P/2024/M027 Sheffield</span></div>
<div class="b" style="left:1537px;top:483px;width:56.700000000000045px;height:31px;overflow:hidden"><span class="t" style="left:23.60px;top:0px;font-size:11.5px;line-height:16px;color:#5b0aa8;letter-spacing:0.907px;-webkit-text-stroke:0.05px #5b0aa8;">Electrical</span></div>
<div class="b" style="left:1537px;top:483px;width:56.700000000000045px;height:31px;overflow:hidden"><span class="t" style="left:9.20px;top:15px;font-size:12px;line-height:17px;color:#222a40;letter-spacing:0.475px;">P/2024/M027 Sheffield</span></div>
<div class="b" style="left:1537px;top:534px;width:56.700000000000045px;height:31px;overflow:hidden"><span class="t" style="left:23.60px;top:0px;font-size:11.5px;line-height:16px;color:#5b0aa8;letter-spacing:0.907px;-webkit-text-stroke:0.05px #5b0aa8;">Electrical</span></div>
<div class="b" style="left:1537px;top:534px;width:56.700000000000045px;height:31px;overflow:hidden"><span class="t" style="left:9.20px;top:15px;font-size:12px;line-height:17px;color:#222a40;letter-spacing:0.475px;">P/2024/M027 Sheffield</span></div>
<div class="b" style="left:1601px;top:584px;width:56.700000000000045px;height:31px;overflow:hidden"><span class="t" style="left:23.90px;top:0px;font-size:11.5px;line-height:16px;color:#5b0aa8;letter-spacing:0.397px;-webkit-text-stroke:0.05px #5b0aa8;">Security</span></div>
<div class="b" style="left:1601px;top:584px;width:56.700000000000045px;height:31px;overflow:hidden"><span class="t" style="left:9.60px;top:15px;font-size:12px;line-height:17px;color:#222a40;letter-spacing:0.475px;">P/2024/M027 Sheffield</span></div>
<div class="b" style="left:1601px;top:635px;width:56.700000000000045px;height:31px;overflow:hidden"><span class="t" style="left:23.90px;top:0px;font-size:11.5px;line-height:16px;color:#5b0aa8;letter-spacing:0.397px;-webkit-text-stroke:0.05px #5b0aa8;">Security</span></div>
<div class="b" style="left:1601px;top:635px;width:56.700000000000045px;height:31px;overflow:hidden"><span class="t" style="left:9.60px;top:15px;font-size:12px;line-height:17px;color:#222a40;letter-spacing:0.475px;">P/2024/M027 Sheffield</span></div>
</div>
<div id="overlay"></div>
<div id="modalwrap">
<div class="b" style="left:0px;top:0px;width:57px;height:992px;background:#0a0f1d;"></div>
<div class="b" style="left:0px;top:0px;width:57px;height:57px;background:#171d2c;"></div>
<div class="b" style="left:20px;top:91px;width:21px;height:1px;background:#2c3344;"></div>
<div class="b" style="left:11px;top:108px;width:40px;height:40px;background:#1e2434;border-radius:7px;"></div>
<svg class="i" style="left:14px;top:16px" width="30" height="26" viewBox="0 0 30 26" ><path d="M15.2 1 L29.2 25 L21 25 L11 7.8 Z" fill="#c4c4c4"/><path d="M6.9 15 L14.8 15 L9.6 25 L1.3 25 Z" fill="#c4c4c4"/></svg>
<svg class="i" style="left:19.5px;top:116.5px" width="22" height="22" viewBox="0 0 24 24" fill="#d2d2d2" ><path d="M16.53 11.06L15.47 10l-4.88 4.88-2.12-2.12-1.06 1.06L10.59 17l5.94-5.94zM19 3h-1V1h-2v2H8V1H6v2H5c-1.11 0-1.99.9-1.99 2L3 19c0 1.1.89 2 2 2h14c1.1 0 2-.9 2-2V5c0-1.1-.9-2-2-2zm0 16H5V8h14v11z"/></svg>
<svg class="i" style="left:19.5px;top:159.5px" width="22" height="22" viewBox="0 0 24 24" fill="#868a96" ><path d="M17 12h-5v5h5v-5zM16 1v2H8V1H6v2H5c-1.11 0-1.99.9-1.99 2L3 19c0 1.1.89 2 2 2h14c1.1 0 2-.9 2-2V5c0-1.1-.9-2-2-2h-1V1h-2zm3 18H5V8h14v11z"/></svg>
<svg class="i" style="left:19.5px;top:203px" width="22" height="22" viewBox="0 0 24 24" fill="#868a96" ><path d="M17 12h-5v5h5v-5zM16 1v2H8V1H6v2H5c-1.11 0-1.99.9-1.99 2L3 19c0 1.1.89 2 2 2h14c1.1 0 2-.9 2-2V5c0-1.1-.9-2-2-2h-1V1h-2zm3 18H5V8h14v11z"/></svg>
<svg class="i" style="left:20px;top:246px" width="22" height="22" viewBox="0 0 22 22" fill="none" stroke="#868a96" stroke-width="2.1"><rect x="2" y="2" width="15" height="15" rx="2"/><path d="M2 7.5h15M9.5 7.5v9.5M20 6v12a2 2 0 0 1-2 2H6"/></svg>
<div class="b" style="left:571px;top:91px;width:586px;height:810px;background:#ffffff;border-radius:5px;box-shadow:0 11px 15px -7px rgba(0,0,0,.2),0 24px 38px 3px rgba(0,0,0,.14),0 9px 46px 8px rgba(0,0,0,.12);overflow:hidden;"></div>
<div class="b" style="left:571px;top:91px;width:586px;height:50px;background:#3b53df;border-radius:5px 5px 0 0;"></div>
<svg class="i" style="left:1112.5px;top:104.3px" width="24" height="24" viewBox="0 0 24 24" fill="#ffffff" ><path d="M19 6.41L17.59 5 12 10.59 6.41 5 5 6.41 10.59 12 5 17.59 6.41 19 12 13.41 17.59 19 19 17.59 13.41 12z"/></svg>
<div class="b" style="left:571px;top:141px;width:586px;height:43px;background:#f1f4f9;border-bottom:1px solid #e6e9f0;"></div>
<div class="b" style="left:703px;top:141px;width:144px;height:43px;background:#ffffff;border-bottom:2px solid #3b53df;"></div>
<svg class="i" style="left:590px;top:156px" width="14" height="14" viewBox="0 0 24 24" fill="#6d5ce7" ><path d="M12 2C6.48 2 2 6.48 2 12s4.48 10 10 10 10-4.48 10-10S17.52 2 12 2zm-2 15l-5-5 1.41-1.41L10 14.17l7.59-7.59L19 8l-9 9z"/></svg>
<svg class="i" style="left:721px;top:156px" width="14" height="14" viewBox="0 0 24 24" fill="#b3261e" ><path d="M13.127 14.56l1.43-1.43 6.44 6.443L19.57 21zm4.293-5.73l2.86-2.86c-3.95-3.95-10.35-3.96-14.3-.02 3.93-1.3 8.31-.25 11.44 2.88zM5.95 5.98c-3.94 3.95-3.93 10.35.02 14.3l2.86-2.86C5.7 14.29 4.65 9.91 5.95 5.98zm.02-.02l-.01.01c-.38 3.01 1.17 6.88 4.3 10.02l5.73-5.73c-3.13-3.13-7.01-4.68-10.02-4.3z"/></svg>
<div class="b" style="left:755px;top:215px;width:380px;height:42px;background:#ffffff;border:1px solid #c3c9e6;border-radius:4px;"></div>
<div class="b" style="left:755px;top:274px;width:380px;height:32px;background:#ffffff;border:1px solid #c3c9e6;border-radius:4px;"></div>
<div class="b" style="left:755px;top:324px;width:180px;height:32px;background:#ffffff;border:1px solid #c3c9e6;border-radius:4px;"></div>
<div class="b" style="left:955px;top:324px;width:180px;height:32px;background:#ffffff;border:1px solid #c3c9e6;border-radius:4px;"></div>
<svg class="i" style="left:761.8px;top:332.8px" width="13.5" height="13.5" viewBox="0 0 24 24" fill="#6c63f0" ><path d="M19 3h-1V1h-2v2H8V1H6v2H5c-1.11 0-1.99.9-1.99 2L3 19c0 1.1.89 2 2 2h14c1.1 0 2-.9 2-2V5c0-1.1-.9-2-2-2zm0 16H5V8h14v11zM7 10h5v5H7z"/></svg>
<svg class="i" style="left:961.8px;top:332.8px" width="13.5" height="13.5" viewBox="0 0 24 24" fill="#6c63f0" ><path d="M19 3h-1V1h-2v2H8V1H6v2H5c-1.11 0-1.99.9-1.99 2L3 19c0 1.1.89 2 2 2h14c1.1 0 2-.9 2-2V5c0-1.1-.9-2-2-2zm0 16H5V8h14v11zM7 10h5v5H7z"/></svg>
<div class="b" style="left:942.5px;top:339px;width:5px;height:1.5px;background:#80848f;"></div>
<div class="b" style="left:1065px;top:366.7px;width:14px;height:14px;background:#ffffff;border:1.4px solid #454b5c;border-radius:1.5px;"></div>
<div class="b" style="left:755px;top:409px;width:380px;height:42px;background:#ffffff;border:1px solid #c3c9e6;border-radius:4px;"></div>
<svg class="i" style="left:1110px;top:236px" width="10" height="10" viewBox="0 0 10 10" ><path d="M2 9L9 2M6 9L9 6" stroke="#555" stroke-width="1" fill="none"/></svg>
<svg class="i" style="left:1110px;top:430px" width="10" height="10" viewBox="0 0 10 10" ><path d="M2 9L9 2M6 9L9 6" stroke="#555" stroke-width="1" fill="none"/></svg>
<div class="b" style="left:600.7px;top:480.2px;width:14px;height:14px;background:#ffffff;border:1.4px solid #454b5c;border-radius:1.5px;"></div>
<div class="b" style="left:571px;top:840px;width:586px;height:61px;background:#f1f4f9;border-top:1px solid #e6e9f0;border-radius:0 0 5px 5px;"></div>
<div class="b" style="left:1011px;top:855px;width:59px;height:31px;background:#ffffff;border:1px solid #c9cedb;border-radius:3px;"></div>
<div class="b" style="left:1085px;top:855px;width:57px;height:31px;background:#3b53df;border-radius:3px;"></div>
<span class="t" style="left:586.00px;top:103px;font-size:19.5px;line-height:27px;color:#ffffff;letter-spacing:-0.218px;-webkit-text-stroke:0.6px #ffffff;">Create Event</span>
<span class="t" style="left:610.40px;top:153px;font-size:13.5px;line-height:19px;color:#2a3142;letter-spacing:0.066px;">Project Task</span>
<span class="t" style="left:743.00px;top:154px;font-size:13px;line-height:18px;color:#101828;letter-spacing:0.387px;-webkit-text-stroke:0.4px #101828;">Out of service</span>
<span class="t" style="left:594.00px;top:215px;font-size:13px;line-height:18px;color:#263264;letter-spacing:0.663px;-webkit-text-stroke:0.25px #263264;">Title</span>
<span class="t" style="left:769.50px;top:227px;font-size:13px;line-height:18px;color:#1e2436;letter-spacing:0.314px;">MOT Servicing</span>
<span class="t" style="left:594.00px;top:281px;font-size:13px;line-height:18px;color:#263264;letter-spacing:0.275px;-webkit-text-stroke:0.25px #263264;">Asset</span>
<span class="t" style="left:629.20px;top:281px;font-size:14px;line-height:20px;color:#9b1c1c;font-weight:700;">*</span>
<span class="t" style="left:769.50px;top:281px;font-size:13px;line-height:18px;color:#1e2436;letter-spacing:0.268px;">Ford Transit Van - 2019</span>
<span class="t" style="left:593.00px;top:332px;font-size:13px;line-height:18px;color:#263264;letter-spacing:0.274px;-webkit-text-stroke:0.25px #263264;">Event Time</span>
<span class="t" style="left:665.40px;top:332px;font-size:14px;line-height:20px;color:#9b1c1c;font-weight:700;">*</span>
<span class="t" style="left:781.20px;top:331px;font-size:13px;line-height:18px;color:#1e2436;letter-spacing:0.535px;">29/12/2024 00:00</span>
<span class="t" style="left:981.20px;top:331px;font-size:13px;line-height:18px;color:#1e2436;letter-spacing:0.568px;">20/01/2025 00:00</span>
<span class="t" style="left:1094.00px;top:365px;font-size:13px;line-height:18px;color:#1e2436;letter-spacing:0.163px;">All day</span>
<span class="t" style="left:593.00px;top:410px;font-size:13px;line-height:18px;color:#263264;letter-spacing:0.570px;-webkit-text-stroke:0.25px #263264;">Description</span>
<span class="t" style="left:629.00px;top:478px;font-size:13px;line-height:18px;color:#1e2436;letter-spacing:0.287px;">This time off is paid for.</span>
<span class="t" style="left:1026.00px;top:862px;font-size:11.5px;line-height:16px;color:#2a3566;-webkit-text-stroke:0.15px #2a3566;">Close</span>
<span class="t" style="left:1100.00px;top:862px;font-size:11.5px;line-height:16px;color:#ffffff;letter-spacing:0.061px;-webkit-text-stroke:0.7px #ffffff;">Save</span>
</div>
</body>
</html>
